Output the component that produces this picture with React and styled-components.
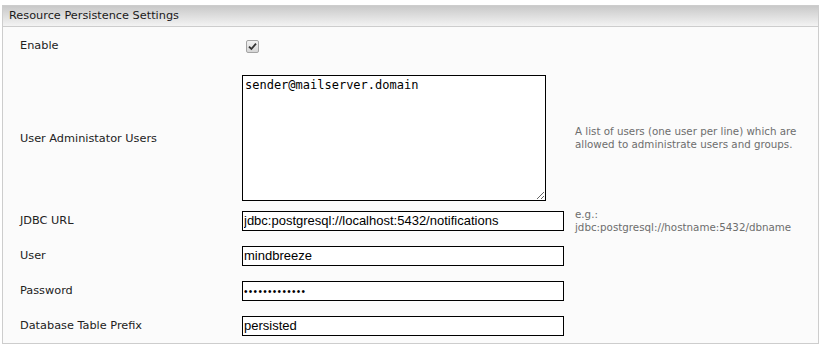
import React from 'react';
import styled, { createGlobalStyle } from 'styled-components';

const GlobalStyle = createGlobalStyle`
  html, body {
    margin: 0;
    padding: 0;
    background: #fff;
  }
  body {
    font-family: "DejaVu Sans", Verdana, sans-serif;
  }
`;

const Panel = styled.div`
  margin: 5px 0 0 2px;
  width: 815px;
  border: 1px solid #cdcdcd;
  background: #fbfbfb;
`;

const Header = styled.div`
  height: 20px;
  line-height: 20px;
  padding-left: 6px;
  font-size: 11.3px;
  color: #1a1a1a;
  background: linear-gradient(to bottom, #c9c9c9 0%, #dedede 50%, #f3f3f3 100%);
  border-bottom: 1px solid #cdcdcd;
`;

const Row = styled.div`
  display: grid;
  grid-template-columns: 222px 333px 1fr;
  align-items: center;
  padding: ${(p) => p.$pad || '0'};
  min-height: ${(p) => p.$height || 'auto'};
  padding-left: 17px;
`;

const Label = styled.div`
  font-size: 11.3px;
  color: #222;
`;

const Help = styled.div`
  font-size: 10.3px;
  line-height: 13px;
  color: #6d6d6d;
`;

const TextInput = styled.input`
  box-sizing: border-box;
  width: 322px;
  height: 20px;
  margin: 0;
  padding: 0 1px;
  border: 1px solid #000;
  background: #fff;
  font-family: "Liberation Sans", Arial, sans-serif;
  font-size: 13px;
  color: #000;
  outline: none;
  &[type='password'] {
    font-size: 10px;
    letter-spacing: 1.3px;
  }
`;

const TextArea = styled.textarea`
  box-sizing: border-box;
  display: block;
  width: 304px;
  height: 126px;
  margin: 0;
  padding: 2px;
  border: 1px solid #000;
  background: #fff;
  font-family: "DejaVu Sans Mono", monospace;
  font-size: 12px;
  color: #000;
  outline: none;
`;

const CheckBox = styled.span`
  display: inline-flex;
  align-items: center;
  justify-content: center;
  margin-left: 4px;
  width: 11px;
  height: 11px;
  border: 1px solid #a4a4a4;
  border-radius: 2px;
  background: linear-gradient(to bottom, #f2f2f2, #d6d6d6);
`;

const Check = () => (
  <svg width="9" height="9" viewBox="0 0 9 9">
    <path d="M1 4.6 L3.4 7 L8 1.6" fill="none" stroke="#333" strokeWidth="1.8" />
  </svg>
);

export default function App() {
  return (
    <>
      <GlobalStyle />
      <Panel>
        <Header>Resource Persistence Settings</Header>
        <Row $height="36px">
          <Label>Enable</Label>
          <div>
            <CheckBox>
              <Check />
            </CheckBox>
          </div>
        </Row>
        <Row $pad="12px 0 2px">
          <Label>User Administator Users</Label>
          <div>
            <TextArea defaultValue="sender@mailserver.domain" />
          </div>
          <Help>
            A list of users (one user per line) which are
            <br />
            allowed to administrate users and groups.
          </Help>
        </Row>
        <Row $height="35px">
          <Label>JDBC URL</Label>
          <div>
            <TextInput defaultValue="jdbc:postgresql://localhost:5432/notifications" />
          </div>
          <Help>
            e.g.:
            <br />
            jdbc:postgresql://hostname:5432/dbname
          </Help>
        </Row>
        <Row $height="35px">
          <Label>User</Label>
          <div>
            <TextInput defaultValue="mindbreeze" />
          </div>
        </Row>
        <Row $height="35px">
          <Label>Password</Label>
          <div>
            <TextInput type="password" defaultValue="persistedpass" />
          </div>
        </Row>
        <Row $height="35px">
          <Label>Database Table Prefix</Label>
          <div>
            <TextInput defaultValue="persisted" />
          </div>
        </Row>
      </Panel>
    </>
  );
}
